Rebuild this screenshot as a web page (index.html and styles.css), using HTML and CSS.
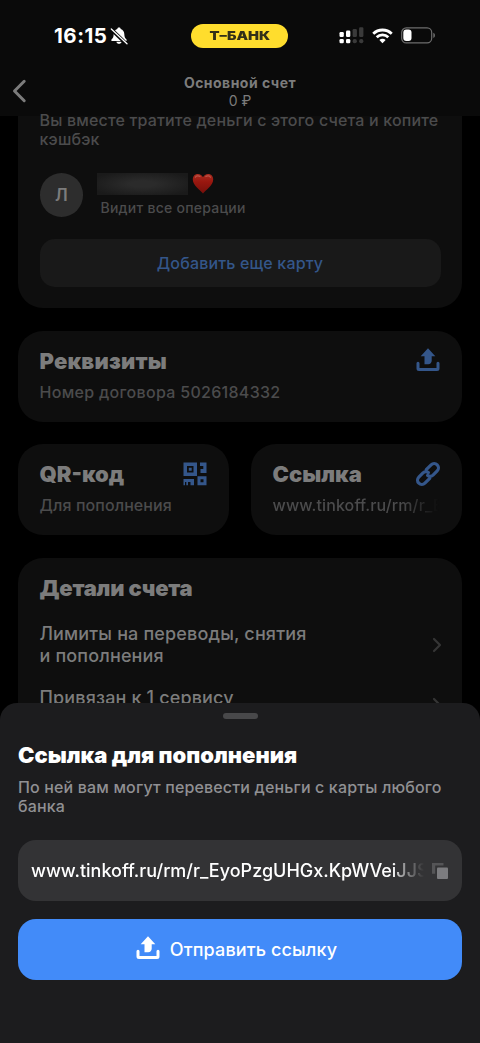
FILE: index.html
```html
<!DOCTYPE html>
<html lang="ru">
<head>
<meta charset="utf-8">
<title>Основной счет</title>
<link rel="stylesheet" href="styles.css">
</head>
<body>
<div class="screen">
  <header class="header">
    <div class="status">
      <div class="status-left">
        <span class="clock">16:15</span>
        <svg class="bell" width="18" height="18" viewBox="0 0 18 18"><path d="M9 .6c.9 0 1.500.5 1.700 1.300 2.300.8 3.500 2.600 3.600 5 .1 3 .8 4.300 2.200 5.600.5.600.3 1.400-.6 1.400H2.100c-.9 0-1.100-.8-.6-1.400C2.900 11.200 3.600 9.900 3.700 6.900c.1-2.400 1.300-4.200 3.600-5C7.500 1.100 8.100.6 9 .6zM6.400 14.700h5.200c-.3 1.300-1.300 2.100-2.600 2.100s-2.300-.8-2.600-2.100z" fill="#fff"/><path d="M1.300 2.400 16.300 16.800" stroke="#0a0a0a" stroke-width="3.600"/><path d="M1.300 2 17 16.800" stroke="#fff" stroke-width="1.300" stroke-linecap="round"/></svg>
      </div>
      <div class="pill"><span class="brand">Т–БАНК</span></div>
      <div class="status-right">
        <svg width="25" height="17" viewBox="0 0 25 17"><g fill="#fff"><rect x=".5" y="5" width="4.300" height="5" rx="1.200"/><rect x="7" y="3.500" width="4.300" height="6.500" rx="1.200"/><rect x=".5" y="12" width="4.300" height="4.300" rx="1.300"/><rect x="7" y="12" width="4.300" height="4.300" rx="1.300"/></g><g fill="#3a3a3a"><rect x="13.600" y="2" width="4.300" height="8" rx="1.200"/><rect x="20.100" y=".2" width="4.300" height="9.800" rx="1.200"/><rect x="13.600" y="12" width="4.300" height="4.300" rx="2"/><rect x="20.100" y="12" width="4.300" height="4.300" rx="2"/></g></svg>
        <svg class="wifi" width="21" height="16" viewBox="0 0 22 16"><g fill="none" stroke="#fff" stroke-width="2.900"><path d="M1.300 5.700a13.800 13.800 0 0 1 19.400 0"/><path d="M4.900 9.300a8.700 8.700 0 0 1 12.200 0"/></g><path d="M11 15.500 7.700 12.200a4.700 4.700 0 0 1 6.600 0z" fill="#fff"/></svg>
        <svg class="battery" width="35" height="17" viewBox="0 0 35 17"><rect x=".7" y=".9" width="30" height="15" rx="4.600" fill="none" stroke="#6d6d6d" stroke-width="1.200"/><rect x="2.300" y="2.600" width="8.200" height="11.400" rx="3" fill="#fff"/><path d="M32.300 5.800c2.200.8 2.200 4.400 0 5.200z" fill="#6d6d6d"/></svg>
      </div>
    </div>
    <div class="nav">
      <svg class="back" width="15" height="24" viewBox="0 0 15 24"><path d="M12.200 2.300 2.500 12l9.700 9.700" fill="none" stroke="#7c7c7c" stroke-width="3" stroke-linecap="round" stroke-linejoin="round"/></svg>
      <div class="nav-title"><b>Основной счет</b><span>0 ₽</span></div>
    </div>
  </header>

  <main class="content">
    <section class="card share">
      <p class="note share-note">Вы вместе тратите деньги с этого счета и копите<br>кэшбэк</p>
      <div class="person">
        <div class="avatar">Л</div>
        <div class="person-text">
          <div class="person-name"><span class="redacted"></span>
            <svg width="22" height="21" viewBox="0 0 22 21"><defs><linearGradient id="heart" x1="0" y1="0" x2="0" y2="1"><stop offset="0" stop-color="#a92d20"/><stop offset=".4" stop-color="#99170f"/><stop offset="1" stop-color="#76100b"/></linearGradient></defs><path d="M11 20.500C8.500 17.200.8 12.700.8 6.500.8 3.200 3 1 5.800 1c2.400 0 4.300 1.300 5.200 3.300C11.900 2.300 13.800 1 16.200 1c2.800 0 5 2.200 5 5.500 0 6.200-7.700 10.700-10.200 14z" fill="url(#heart)"/><path d="M3.400 4.200c.8-1.500 3.200-1.800 4.600-.7M13.800 3.500c1.400-1.100 3.800-.8 4.600.7" fill="none" stroke="#bd5448" stroke-width="1.200" stroke-linecap="round"/></svg>
          </div>
          <div class="person-sub">Видит все операции</div>
        </div>
      </div>
      <button class="add">Добавить еще карту</button>
    </section>

    <section class="card tile">
      <div class="tile-head"><h2 class="t-req">Реквизиты</h2>
        <svg class="upload" width="24" height="24" viewBox="0 0 24 24"><path d="M12 .3 19.300 8.200h-3.600v4.500c0 1.900-1.500 3.500-3.500 3.500H8.500v-8H4.700z" fill="currentColor"/><path d="M2 15.300v5.200c0 .6.400 1 1 1h18c.6 0 1-.4 1-1v-5.200" fill="none" stroke="currentColor" stroke-width="3" stroke-linecap="round"/></svg>
      </div>
      <p class="note t-num">Номер договора 5026184332</p>
    </section>

    <div class="pair">
      <section class="card tile">
        <div class="tile-head"><h2 class="t-qr">QR-код</h2>
          <svg class="qr" width="24" height="24" viewBox="0 0 24 24" fill="currentColor"><path fill-rule="evenodd" d="M.5.500h13.500v13.500H.5zM4 4v6.500h6.500V4z"/><path d="M5.800 5.800h2.900v2.900H5.800zM17 .5h6.500v10.500H17.500V7h2.800V4H17zM.5 17h10.500v6.300H7.500v-3.300H5v3.300H3.300V20H2v3.300H.5z"/><path fill-rule="evenodd" d="M14.500 14.300h9v9h-9zM17.500 17.300v3h3v-3z"/></svg>
        </div>
        <p class="note t-for">Для пополнения</p>
      </section>
      <section class="card tile">
        <div class="tile-head"><h2 class="t-link">Ссылка</h2>
          <svg class="chain" width="26" height="26" viewBox="0 0 26 26"><g transform="rotate(-45 13 13)" fill="none" stroke="currentColor" stroke-width="3.200" stroke-linecap="round"><path d="M11.200 17.300H4.300a4.300 4.300 0 0 1 0-8.600h5.900a4.300 4.300 0 0 1 4.100 3.600"/><path d="M14.800 8.700h6.900a4.300 4.300 0 0 1 0 8.600h-5.900a4.300 4.300 0 0 1-4.100-3.600"/></g></svg>
        </div>
        <p class="note fade-link">www.tinkoff.ru/rm/r_E</p>
      </section>
    </div>

    <section class="card details">
      <h2 class="t-det">Детали счета</h2>
      <div class="row row-first"><p>Лимиты на переводы, снятия<br>и пополнения</p>
        <svg width="10" height="16" viewBox="0 0 10 16"><path d="m2 2 6 6-6 6" fill="none" stroke="#353535" stroke-width="2.200" stroke-linecap="round" stroke-linejoin="round"/></svg></div>
      <div class="row row-second"><p>Привязан к 1 сервису</p>
        <svg width="10" height="16" viewBox="0 0 10 16"><path d="m2 2 6 6-6 6" fill="none" stroke="#353535" stroke-width="2.200" stroke-linecap="round" stroke-linejoin="round"/></svg></div>
    </section>
  </main>

  <div class="sheet">
    <div class="grabber"></div>
    <h1>Ссылка для пополнения</h1>
    <p class="sheet-note">По ней вам могут перевести деньги с карты любого<br>банка</p>
    <div class="field"><span class="url">www.tinkoff.ru/rm/r_EyoPzgUHGx.KpWVeiJJS</span>
      <svg width="18" height="18" viewBox="0 0 18 18"><path d="M1 1h11.500v2.500H4.200v8.200H1z" fill="#555557"/><rect x="6" y="5.500" width="11" height="11.500" rx="1" fill="#7c7c7f"/></svg>
    </div>
    <button class="send">
      <svg class="send-icon" width="24" height="24" viewBox="0 0 24 24"><path d="M12 .3 19.300 8.200h-3.600v4.500c0 1.900-1.500 3.500-3.500 3.500H8.500v-8H4.700z" fill="currentColor"/><path d="M2 15.300v5.200c0 .6.400 1 1 1h18c.6 0 1-.4 1-1v-5.200" fill="none" stroke="currentColor" stroke-width="3" stroke-linecap="round"/></svg>
      <span>Отправить ссылку</span>
    </button>
  </div>
</div>
</body>
</html>
```
FILE: styles.css
```css
* { box-sizing: border-box; }
body, p, h1, h2 { margin: 0; }
body { background: #000; font-family: Inter, "Liberation Sans", sans-serif; }
svg { display: block; flex: none; }
button { border: 0; font: inherit; padding: 0; }
.screen { position: relative; width: 480px; height: 1043px; overflow: hidden; white-space: nowrap; background: #000; }

.header { height: 116px; background: #0a0a0a; }
.status { height: 71px; padding: 0 44px 0 54px; display: grid; grid-template-columns: 137px 97px 1fr; align-items: center; }
.status-left { display: flex; align-items: center; gap: 3px; }
.clock { color: #fff; font-size: 20.500px; font-weight: 700; line-height: 24px; letter-spacing: .5px; }
.pill { height: 24px; border-radius: 12px; background: #ffdd2d; display: flex; align-items: center; justify-content: center; }
.brand { color: #333018; font-size: 12px; font-weight: 900; line-height: 24px; transform: scaleX(1.22); }
.status-right { display: flex; align-items: center; justify-content: flex-end; }
.wifi { margin-left: 8px; }
.battery { margin-left: 8px; }
.nav { display: grid; grid-template-columns: 60px 1fr 60px; }
.back { margin: 8px 0 0 12px; }
.nav-title { display: flex; flex-direction: column; align-items: center; color: #7c7c7c; padding-top: 3px; }
.nav-title b { font-size: 14px; line-height: 18px; font-weight: 700; letter-spacing: .48px; }
.nav-title span { font-size: 14px; line-height: 17px; }

.content { padding: 0 18px; display: flex; flex-direction: column; gap: 22.500px; }
.card { background: #0e0e0e; border-radius: 25px; color: #7c7c7c; }
.note { color: #4b4b4c; font-size: 16px; font-weight: 500; line-height: 20px; }
.share { height: 192px; padding: 0 21.500px; border-radius: 0 0 25px 25px; }
.share-note { margin-top: -5px; letter-spacing: .17px; line-height: 19px; }
.person { display: flex; margin-top: 24px; gap: 14px; }
.avatar { width: 43.500px; height: 44px; border-radius: 50%; background: #2d2d2d; color: #7c7c7c; font-size: 17px; font-weight: 600; line-height: 44px; text-align: center; }
.person-name { display: flex; gap: 3.500px; height: 22px; }
.redacted { width: 91px; height: 22px; background: radial-gradient(ellipse at center, #2b2b2b 20%, #1a1a1a 85%); }
.person-sub { padding-left: 3.500px; color: #4b4b4c; font-size: 14px; font-weight: 500; line-height: 20px; margin-top: 3px; letter-spacing: .25px; }
.add { display: block; width: 401px; height: 48px; margin-top: 21px; border-radius: 15px; background: #191919; color: #34568a; font-size: 16px; font-weight: 500; letter-spacing: .18px; }

h2 { font-size: 22px; line-height: 28px; font-weight: 900; color: #7c7c7c; }
.tile { height: 91px; padding: 16px 22px 0 21.500px; }
.tile-head { display: flex; justify-content: space-between; height: 35px; color: #34568a; }
.tile .note { line-height: 20px; }
.t-req { letter-spacing: .22px; }
.t-det { letter-spacing: -.22px; }
.t-num { letter-spacing: .3px; }
.t-for { letter-spacing: .1px; }
.pair { display: grid; grid-template-columns: 211px 211px; gap: 22px; }
.upload { margin-top: 1px; }
.qr { margin: 2px 0 0; }
.chain { margin: 1px -1px 0 0; }
.fade-link { letter-spacing: .12px; margin-right: -2px; -webkit-mask-image: linear-gradient(90deg, #000 76%, transparent); mask-image: linear-gradient(90deg, #000 76%, transparent 98%); }
.details { height: 200px; padding: 16px 21.500px 0; }
.row { display: flex; justify-content: space-between; align-items: center; font-size: 18px; line-height: 22px; font-weight: 500; letter-spacing: .15px; }
.row svg { margin-right: -1px; }
.row-first { margin-top: 21px; }
.row-second { margin-top: 16px; }
.row-second svg { margin-top: 14px; }

.sheet { position: absolute; left: 0; right: 0; top: 703px; height: 340px; background: #1c1c1e; border-radius: 17px 17px 0 0; padding: 10px 18px 0; }
.grabber { width: 35px; height: 6px; border-radius: 3px; background: #48484a; margin: 0 auto; }
h1 { margin-top: 22px; font-size: 22px; line-height: 28px; font-weight: 900; color: #fff; }
.sheet-note { margin-top: 9px; color: #909093; font-size: 16px; line-height: 19px; font-weight: 500; letter-spacing: .15px; }
.field { margin-top: 24px; height: 61px; border-radius: 18px; background: #333335; padding: 0 13px; display: flex; align-items: center; justify-content: space-between; }
.url { width: 393px; color: #fff; font-size: 18px; line-height: 26px; font-weight: 500; -webkit-mask-image: linear-gradient(90deg, #000 88%, transparent); mask-image: linear-gradient(90deg, #000 92%, #0009 94%, transparent); }
.send { margin-top: 18px; padding-right: 7px; width: 100%; height: 61px; border-radius: 18px; background: #428bf9; color: #fff; font-size: 18px; font-weight: 500; letter-spacing: .13px; display: flex; align-items: center; justify-content: center; gap: 10px; }
.send-icon { margin-top: -3px; }
```
